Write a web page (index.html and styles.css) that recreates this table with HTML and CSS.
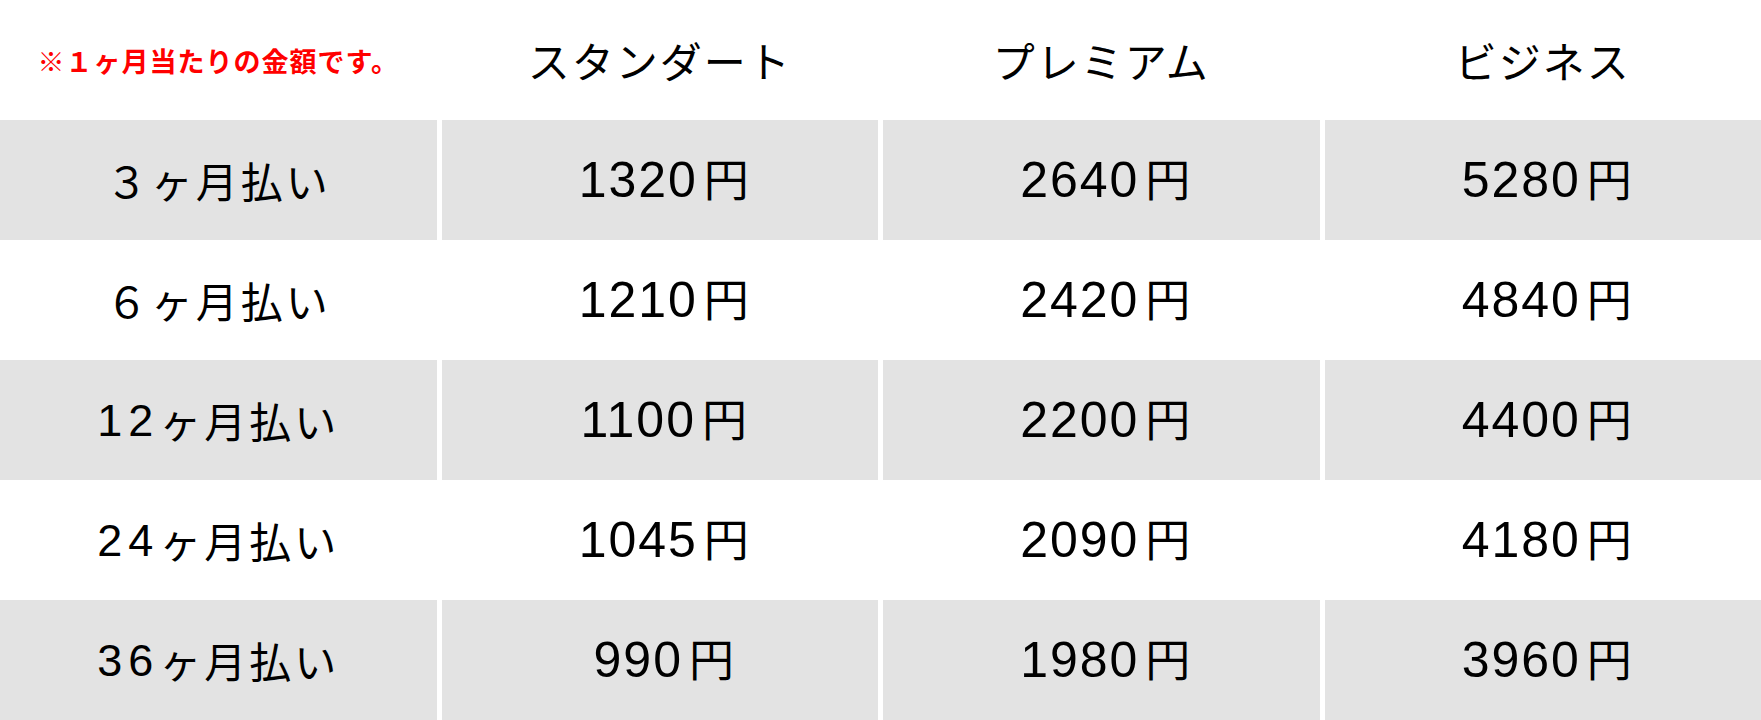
FILE: index.html
```html
<!DOCTYPE html>
<html lang="ja">
<head>
<meta charset="utf-8">
<title>料金表</title>
<link rel="stylesheet" href="styles.css">
</head>
<body>
<div class="price-table">
  <div class="row head">
    <div class="cell note">※１ヶ月当たりの金額です。</div>
    <div class="cell">スタンダート</div>
    <div class="cell">プレミアム</div>
    <div class="cell">ビジネス</div>
  </div>
  <div class="row gray">
    <div class="cell label">３ヶ月払い</div>
    <div class="cell num"><span class="amt"><span class="d">1320</span><span class="yen">円</span></span></div>
    <div class="cell num"><span class="amt"><span class="d">2640</span><span class="yen">円</span></span></div>
    <div class="cell num"><span class="amt"><span class="d">5280</span><span class="yen">円</span></span></div>
  </div>
  <div class="row">
    <div class="cell label">６ヶ月払い</div>
    <div class="cell num"><span class="amt"><span class="d">1210</span><span class="yen">円</span></span></div>
    <div class="cell num"><span class="amt"><span class="d">2420</span><span class="yen">円</span></span></div>
    <div class="cell num"><span class="amt"><span class="d">4840</span><span class="yen">円</span></span></div>
  </div>
  <div class="row gray">
    <div class="cell label"><span class="n">12</span>ヶ月払い</div>
    <div class="cell num"><span class="amt"><span class="d">1100</span><span class="yen">円</span></span></div>
    <div class="cell num"><span class="amt"><span class="d">2200</span><span class="yen">円</span></span></div>
    <div class="cell num"><span class="amt"><span class="d">4400</span><span class="yen">円</span></span></div>
  </div>
  <div class="row">
    <div class="cell label"><span class="n">24</span>ヶ月払い</div>
    <div class="cell num"><span class="amt"><span class="d">1045</span><span class="yen">円</span></span></div>
    <div class="cell num"><span class="amt"><span class="d">2090</span><span class="yen">円</span></span></div>
    <div class="cell num"><span class="amt"><span class="d">4180</span><span class="yen">円</span></span></div>
  </div>
  <div class="row gray">
    <div class="cell label"><span class="n">36</span>ヶ月払い</div>
    <div class="cell num"><span class="amt"><span class="d">990</span><span class="yen">円</span></span></div>
    <div class="cell num"><span class="amt"><span class="d">1980</span><span class="yen">円</span></span></div>
    <div class="cell num"><span class="amt"><span class="d">3960</span><span class="yen">円</span></span></div>
  </div>
</div>
</body>
</html>
```

FILE: styles.css
```css
html, body {
  margin: 0;
  padding: 0;
  background: #ffffff;
}

body {
  font-family: "Noto Sans CJK JP", "Noto Sans", sans-serif;
  color: #000000;
}

.price-table {
  display: flex;
  flex-direction: column;
  width: 1761px;
}

.row {
  display: grid;
  grid-template-columns: repeat(4, 1fr);
  column-gap: 5px;
  height: 120px;
}

.cell {
  display: flex;
  align-items: center;
  justify-content: center;
  font-size: 42px;
  letter-spacing: 2px;
  line-height: 1;
  white-space: pre;
}

.row.gray .cell {
  background: #e3e3e3;
}

.label {
  letter-spacing: 3px;
}

.label .n {
  font-family: "Liberation Sans", "Noto Sans CJK JP", sans-serif;
  font-size: 45px;
  letter-spacing: 6px;
}

.num {
  padding-left: 8px;
}

.amt {
  line-height: 1;
}

.amt .d {
  font-family: "Liberation Sans", "Noto Sans CJK JP", sans-serif;
  font-size: 50px;
  letter-spacing: 2px;
}

.amt .yen {
  font-family: "Noto Sans CJK JP", sans-serif;
  font-size: 45px;
  letter-spacing: 0;
  margin-left: 6px;
}

.note {
  color: #ff0000;
  font-size: 27px;
  font-weight: 700;
  letter-spacing: 1px;
}
```
